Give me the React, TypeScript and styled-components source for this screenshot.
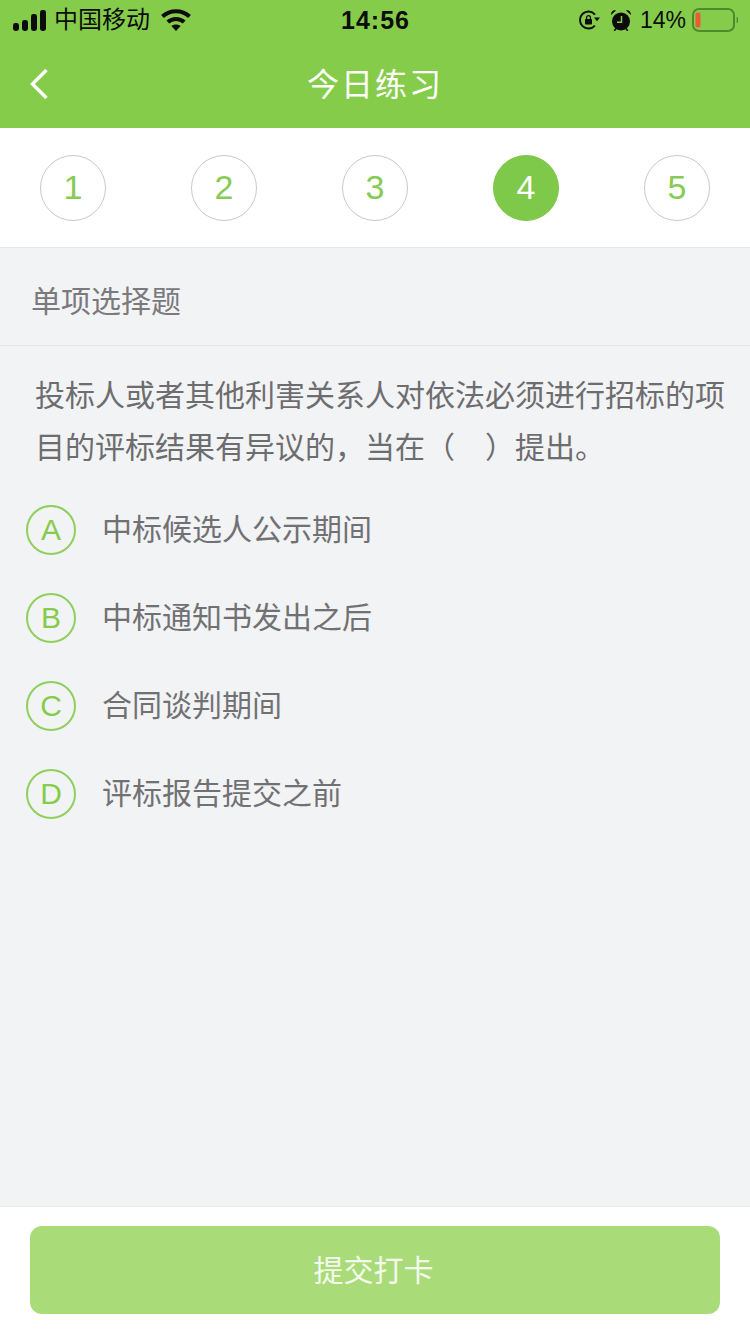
import React from "react";
import styled, { createGlobalStyle } from "styled-components";

const GlobalStyle = createGlobalStyle`
  html, body {
    margin: 0;
    padding: 0;
    background: #f2f3f5;
  }
  * { box-sizing: border-box; }
`;

const FONT = `"Liberation Sans", "Noto Sans CJK SC", sans-serif`;
const GREEN = "#86cc4b";

const Page = styled.div`
  width: 750px;
  height: 1334px;
  display: flex;
  flex-direction: column;
  background: #f2f3f5;
  font-family: ${FONT};
  overflow: hidden;
`;

const Header = styled.header`
  height: 128px;
  background: ${GREEN};
  display: flex;
  flex-direction: column;
`;

const StatusBar = styled.div`
  height: 40px;
  padding: 0 12px 0 13px;
  display: grid;
  grid-template-columns: 1fr auto 1fr;
  align-items: center;
  color: #0c0c0c;
`;

const StatusLeft = styled.div`
  display: flex;
  align-items: center;
`;

const StatusRight = styled.div`
  display: flex;
  align-items: center;
  justify-content: flex-end;
`;

const Carrier = styled.span`
  font-size: 24px;
  line-height: 40px;
  margin-left: 8px;
  margin-right: 11px;
`;

const Clock = styled.span`
  font-size: 25px;
  font-weight: 700;
  letter-spacing: 1px;
`;

const Percent = styled.span`
  font-size: 23px;
  margin: 0 4px 0 9px;
`;

const IconGap = styled.span<{ $mr: number }>`
  display: inline-flex;
  margin-right: ${(p) => p.$mr}px;
`;

const NavBar = styled.div`
  position: relative;
  flex: 1;
  display: flex;
  align-items: center;
  justify-content: center;
  padding-bottom: 4px;
`;

const BackIcon = styled.svg`
  position: absolute;
  left: 29px;
  top: 28px;
`;

const NavTitle = styled.h1`
  margin: 0;
  font-size: 32px;
  font-weight: 400;
  color: #fff;
  letter-spacing: 2px;
`;

const Steps = styled.nav`
  height: 120px;
  background: #fff;
  border-bottom: 1px solid #e6e7e8;
  padding: 0 40px;
  display: flex;
  align-items: center;
  justify-content: space-between;
`;

const Step = styled.div<{ $active?: boolean }>`
  width: 66px;
  height: 66px;
  border-radius: 50%;
  display: flex;
  align-items: center;
  justify-content: center;
  font-size: 34px;
  color: ${(p) => (p.$active ? "#fff" : "#86cb53")};
  background: ${(p) => (p.$active ? "#7ec84a" : "#fff")};
  border: 1px solid ${(p) => (p.$active ? "#7ec84a" : "#c9c9c9")};
`;

const TypeLabel = styled.div`
  height: 98px;
  padding: 4px 31px 0;
  display: flex;
  align-items: center;
  font-size: 30px;
  color: #7a7a7c;
  border-bottom: 1px solid #e6e7e9;
`;

const Content = styled.main`
  flex: 1;
  padding: 24px 0 0;
`;

const Question = styled.div`
  margin: 0 0 31px;
  padding: 0 20px 0 35px;
  font-size: 30px;
  line-height: 52px;
  color: #6d6d6f;
`;

const QuestionLine = styled.div`
  white-space: nowrap;
`;

const Blank = styled.span`
  display: inline-block;
  width: 30px;
`;

const Options = styled.ul`
  margin: 0;
  padding: 0 0 0 26px;
  list-style: none;
  display: flex;
  flex-direction: column;
  gap: 38px;
`;

const Option = styled.li`
  height: 50px;
  display: flex;
  align-items: center;
  gap: 27px;
`;

const OptionBadge = styled.span`
  width: 50px;
  height: 50px;
  flex: none;
  border-radius: 50%;
  border: 2px solid #8fcf5c;
  display: flex;
  align-items: center;
  justify-content: center;
  font-size: 30px;
  color: #86cc4b;
`;

const OptionText = styled.span`
  font-size: 30px;
  color: #717173;
  margin-left: -1px;
  padding-bottom: 6px;
`;

const Footer = styled.footer`
  height: 128px;
  background: #fff;
  border-top: 1px solid #e8e9ec;
  padding: 19px 30px 0;
`;

const Submit = styled.button`
  width: 690px;
  height: 88px;
  border: none;
  border-radius: 12px;
  padding: 0 3px 4px 0;
  background: #aadb79;
  color: #f4fbee;
  font-family: ${FONT};
  font-size: 30px;
`;

const SignalIcon = () => (
  <svg width="33" height="21" viewBox="0 0 33 21">
    <rect x="0" y="13" width="6" height="8" rx="2.4" fill="#0c0c0c" />
    <rect x="9" y="10" width="6" height="11" rx="2.4" fill="#0c0c0c" />
    <rect x="18" y="4" width="6" height="17" rx="2.4" fill="#0c0c0c" />
    <rect x="27" y="0" width="6" height="21" rx="2.4" fill="#0c0c0c" />
  </svg>
);

const WifiIcon = () => (
  <svg width="30" height="22" viewBox="0 0 30 22" fill="none">
    <path d="M1.5 7.5C9 .5 21 .5 28.5 7.5" stroke="#0c0c0c" strokeWidth="4.2" />
    <path d="M6.8 13C11.5 9 18.5 9 23.2 13" stroke="#0c0c0c" strokeWidth="4.2" />
    <path d="M10.4 17C13.1 15 16.9 15 19.6 17L15 22Z" fill="#0c0c0c" />
  </svg>
);

const RotationLockIcon = () => (
  <svg width="21" height="20" viewBox="0 0 21 20" fill="none">
    <path d="M15.9 15.6A8.5 8.5 0 1 1 16 4.6" stroke="#0c0c0c" strokeWidth="1.9" />
    <path d="M15 7.4h6l-3 3.8Z" fill="#0c0c0c" />
    <rect x="6" y="9" width="7" height="5.6" rx="0.8" fill="#0c0c0c" />
    <path d="M7.6 9.2V7.6a1.9 1.9 0 0 1 3.8 0v1.6" stroke="#0c0c0c" strokeWidth="1.3" />
  </svg>
);

const AlarmIcon = () => (
  <svg width="20" height="21" viewBox="0 0 20 21" fill="none">
    <circle cx="10" cy="11.4" r="9" fill="#0c0c0c" />
    <path d="M10.5 6v6.2H6" stroke="#86cc4b" strokeWidth="1.5" />
    <path d="M0 5 5 .6C2.6-.8-.2 1.4 0 5Z M20 5 15 .6c2.4-1.4 5.2.8 5 4.4Z" fill="#0c0c0c" />
    <path d="M3.2 20.8l2-2.4M16.8 20.8l-2-2.4" stroke="#0c0c0c" strokeWidth="1.6" />
  </svg>
);

const BatteryIcon = () => (
  <svg width="48" height="24" viewBox="0 0 48 24" fill="none">
    <rect x="3" y="1" width="41" height="22" rx="6" stroke="#4f8a2e" strokeWidth="2" />
    <rect x="5.5" y="4.5" width="5" height="15" rx="2" fill="#ee5a35" />
    <rect x="46.6" y="9" width="1.4" height="6" rx="0.7" fill="#4f8a2e" />
  </svg>
);

const STEPS = [1, 2, 3, 4, 5];

const OPTIONS = [
  { key: "A", text: "中标候选人公示期间" },
  { key: "B", text: "中标通知书发出之后" },
  { key: "C", text: "合同谈判期间" },
  { key: "D", text: "评标报告提交之前" },
];

export default function App() {
  return (
    <Page>
      <GlobalStyle />
      <Header>
        <StatusBar>
          <StatusLeft>
            <SignalIcon />
            <Carrier>中国移动</Carrier>
            <WifiIcon />
          </StatusLeft>
          <Clock>14:56</Clock>
          <StatusRight>
            <IconGap $mr={11}>
              <RotationLockIcon />
            </IconGap>
            <AlarmIcon />
            <Percent>14%</Percent>
            <BatteryIcon />
          </StatusRight>
        </StatusBar>
        <NavBar>
          <BackIcon width="20" height="32" viewBox="0 0 20 32" fill="none">
            <path d="M17.5 2 3.5 16l14 14" stroke="#fff" strokeWidth="3.4" />
          </BackIcon>
          <NavTitle>今日练习</NavTitle>
        </NavBar>
      </Header>
      <Steps>
        {STEPS.map((n) => (
          <Step key={n} $active={n === 4}>
            {n}
          </Step>
        ))}
      </Steps>
      <TypeLabel>单项选择题</TypeLabel>
      <Content>
        <Question>
          <QuestionLine>投标人或者其他利害关系人对依法必须进行招标的项</QuestionLine>
          <QuestionLine>
            目的评标结果有异议的，当在（<Blank />）提出。
          </QuestionLine>
        </Question>
        <Options>
          {OPTIONS.map((o) => (
            <Option key={o.key}>
              <OptionBadge>{o.key}</OptionBadge>
              <OptionText>{o.text}</OptionText>
            </Option>
          ))}
        </Options>
      </Content>
      <Footer>
        <Submit>提交打卡</Submit>
      </Footer>
    </Page>
  );
}
